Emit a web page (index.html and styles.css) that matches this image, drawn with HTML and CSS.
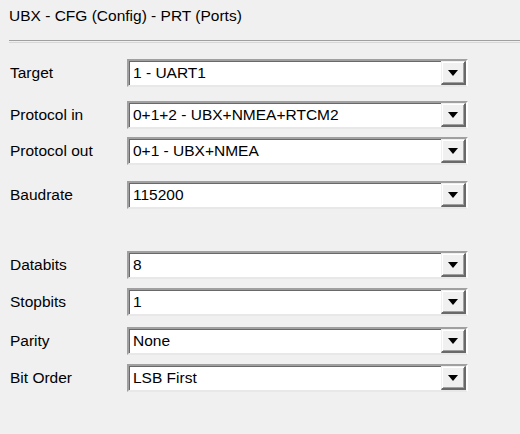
FILE: index.html
```html
<!DOCTYPE html>
<html>
<head>
<meta charset="utf-8">
<link rel="stylesheet" href="styles.css">
</head>
<body>
<div class="page">
  <div class="title">UBX - CFG (Config) - PRT (Ports)</div>
  <div class="sep"></div>
  <div class="form">
    <div class="row r-target"><span class="lbl">Target</span><div class="combo"><span class="val">1 - UART1</span><span class="btn"><i class="arrow"></i></span></div></div>
    <div class="row r-pin"><span class="lbl">Protocol in</span><div class="combo"><span class="val">0+1+2 - UBX+NMEA+RTCM2</span><span class="btn"><i class="arrow"></i></span></div></div>
    <div class="row r-pout"><span class="lbl">Protocol out</span><div class="combo"><span class="val">0+1 - UBX+NMEA</span><span class="btn"><i class="arrow"></i></span></div></div>
    <div class="row r-baud"><span class="lbl">Baudrate</span><div class="combo"><span class="val">115200</span><span class="btn"><i class="arrow"></i></span></div></div>
    <div class="row r-data"><span class="lbl">Databits</span><div class="combo"><span class="val">8</span><span class="btn"><i class="arrow"></i></span></div></div>
    <div class="row r-stop"><span class="lbl">Stopbits</span><div class="combo"><span class="val">1</span><span class="btn"><i class="arrow"></i></span></div></div>
    <div class="row r-par"><span class="lbl">Parity</span><div class="combo"><span class="val">None</span><span class="btn"><i class="arrow"></i></span></div></div>
    <div class="row r-bit"><span class="lbl">Bit Order</span><div class="combo"><span class="val">LSB First</span><span class="btn"><i class="arrow"></i></span></div></div>
  </div>
</div>
</body>
</html>
```
FILE: styles.css
```css
html, body {
  margin: 0;
  padding: 0;
  background: #f0f0f0;
}
body {
  width: 520px;
  height: 434px;
  overflow: hidden;
  font-family: "Liberation Sans", Arial, sans-serif;
  font-size: 15.5px;
  color: #000;
}
.page {
  display: flex;
  flex-direction: column;
}
.title {
  padding-left: 9px;
  margin-top: 7px;
  height: 18px;
  line-height: 18px;
}
.sep {
  margin-top: 15px;
  margin-left: 9px;
  height: 1px;
  border-top: 1px solid #a0a0a0;
  border-bottom: 1px solid #d8d8d8;
}
.form {
  display: flex;
  flex-direction: column;
  padding-left: 10px;
}
.row {
  display: flex;
  align-items: center;
  height: 28px;
}
.r-target { margin-top: 16px; }
.r-pin { margin-top: 14px; }
.r-pout { margin-top: 8px; }
.r-baud { margin-top: 16px; }
.r-data { margin-top: 42px; }
.r-stop { margin-top: 9px; }
.r-par { margin-top: 11px; }
.r-bit { margin-top: 9px; }
.lbl {
  width: 117px;
}
.combo {
  width: 341px;
  height: 28px;
  box-sizing: border-box;
  background: #fff;
  border-top: 2px solid #a0a0a0;
  border-left: 2px solid #a0a0a0;
  border-right: 2px solid #ffffff;
  border-bottom: 2px solid #e8e8e8;
  box-shadow: inset 1px 1px 0 #696969;
  display: flex;
  align-items: stretch;
}
.val {
  flex: 1;
  padding-left: 4px;
  display: flex;
  align-items: center;
}
.btn {
  width: 25px;
  box-sizing: border-box;
  background: #f0f0f0;
  border-top: 1px solid #f0f0f0;
  border-left: 1px solid #f0f0f0;
  border-right: 2px solid #696969;
  border-bottom: 2px solid #696969;
  box-shadow: inset 1px 1px 0 #ffffff, inset -1px -1px 0 #a0a0a0;
  display: flex;
  align-items: center;
  justify-content: center;
}
.arrow {
  width: 0;
  height: 0;
  border-left: 5px solid transparent;
  border-right: 5px solid transparent;
  border-top: 6px solid #000;
  margin-top: 1px;
}
```
